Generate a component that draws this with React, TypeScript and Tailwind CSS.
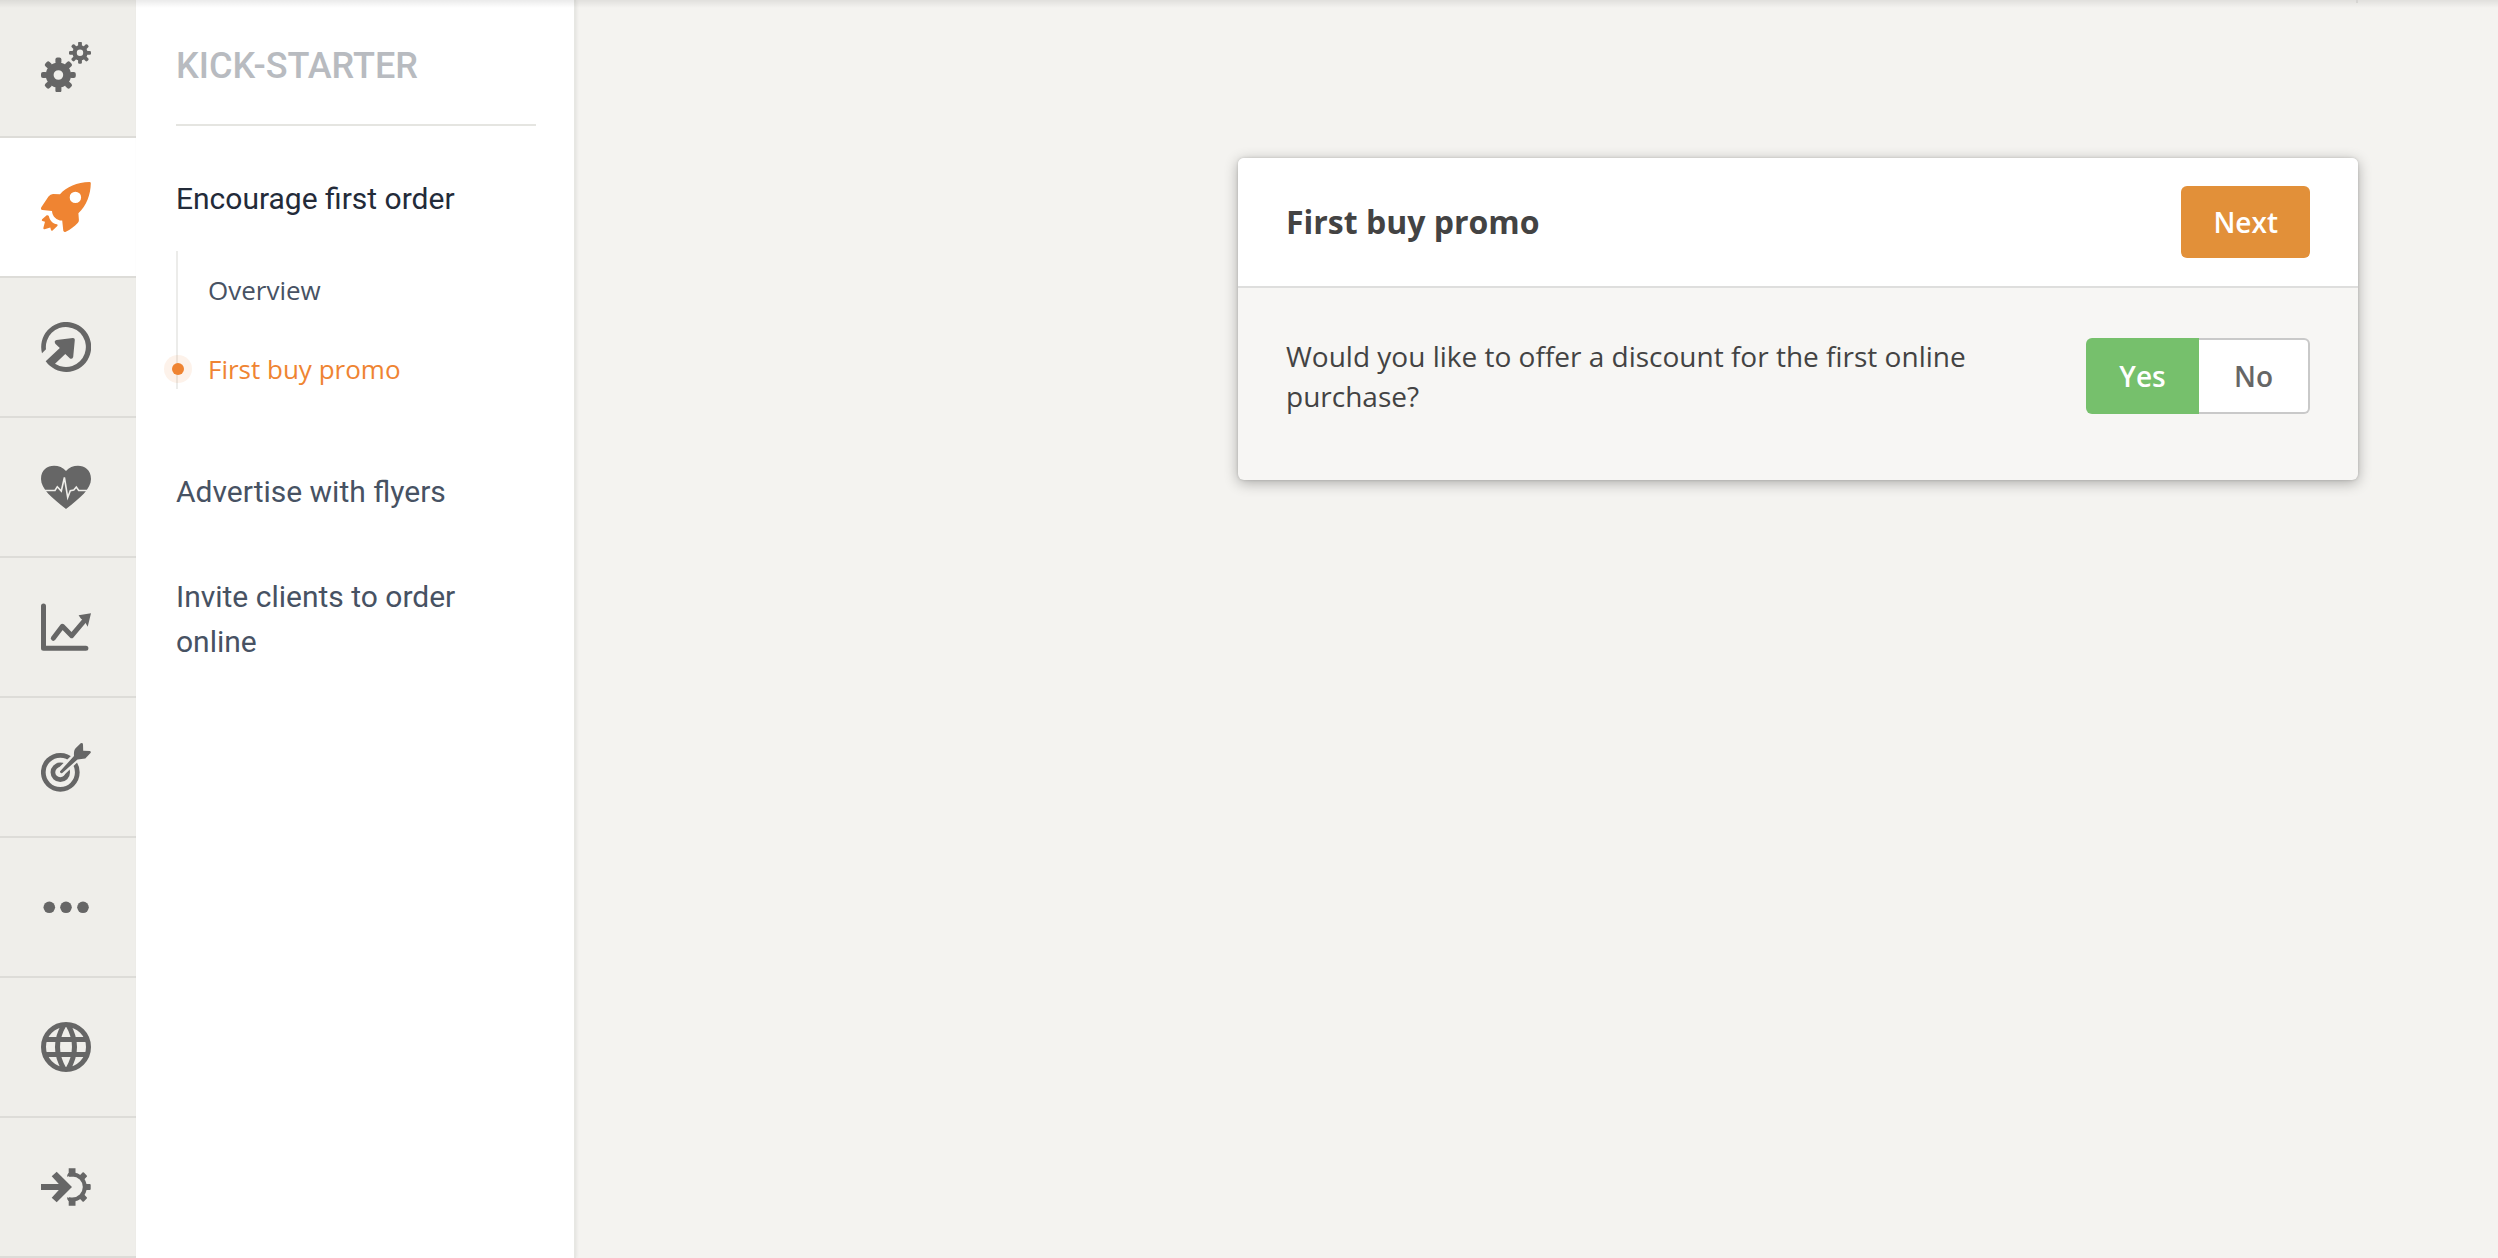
import { useState } from "react";
import type { ReactNode } from "react";

interface RailItem {
  label: string;
  icon: ReactNode;
}

const TEETH = [0, 45, 90, 135, 180, 225, 270, 315];

function Icon({ children }: { children: ReactNode }) {
  return (
    <svg viewBox="0 0 50 50" className="h-[50px] w-[50px]" fill="currentColor" aria-hidden="true">
      {children}
    </svg>
  );
}

interface GearProps {
  cx: number;
  cy: number;
  body: number;
  hole: number;
  reach: number;
  tooth: number;
}

function Gear({ cx, cy, body, hole, reach, tooth }: GearProps) {
  return (
    <g fill="none" stroke="currentColor">
      <circle cx={cx} cy={cy} r={(body + hole) / 2} strokeWidth={body - hole} />
      {TEETH.map((a) => (
        <rect
          key={a}
          x={cx - tooth / 2}
          y={cy - reach}
          width={tooth}
          height={reach - body + 1.5}
          rx={tooth / 3}
          fill="currentColor"
          stroke="none"
          transform={`rotate(${a} ${cx} ${cy})`}
        />
      ))}
    </g>
  );
}

const RAIL: RailItem[] = [
  {
    label: "Setup",
    icon: (
      <Icon>
        <Gear cx={17.4} cy={33} body={12.6} hole={4.8} reach={17.4} tooth={6} />
        <Gear cx={39} cy={10.8} body={7.6} hole={3.2} reach={11} tooth={3.8} />
      </Icon>
    ),
  },
  {
    label: "Kick-starter",
    icon: (
      <Icon>
        <path
          fillRule="evenodd"
          d="M19 12.2C25.5 5 36 .3 48.5 0Q49.8 0 49.8 1.3C49.6 13 45.5 23.5 37.4 31.3L37.9 38Q38 39.8 36.7 41C33.5 44.5 29.5 47.5 24.8 49.8Q22.8 50.5 22.3 48.8L21.2 38.5C16 38.7 11.2 34.5 11 28.9L1.5 28.1Q-.8 27.5 .3 25.3L7.5 14.5Q9.3 12 12 12ZM34.4 9.7a5.7 5.7 0 1 0 0 11.4a5.7 5.7 0 0 0 0-11.4Z"
        />
        <path d="M5.7 33.3Q7.2 32.7 7.9 34.2C8.7 38.5 12 41.8 16 42.2Q17.3 42.8 16.3 44L11.6 48.4Q10.3 49.2 9.9 47.7L9.3 45.4L3.6 47.2Q2 47.3 2.4 45.7L4 39.8L1.4 39Q.2 38.4 1.1 37.3Z" />
      </Icon>
    ),
  },
  {
    label: "Conversion",
    icon: (
      <Icon>
        <path d="M4.7 39.3L18.8 26L14.3 21.7Q12.6 18.8 15.5 18.1L31.8 16.1Q34 16 33.8 18L32.2 35Q31.2 37.5 29 36.6L24.3 32L14 41.8A20 20 0 1 0 5 27.3L1 31.3A25 25 0 1 1 4.7 39.3Z" />
      </Icon>
    ),
  },
  {
    label: "Loyalty",
    icon: (
      <Icon>
        <path d="M25 9C18 .5 0 1.5 0 17C0 27 11 36 25 47C39 36 50 27 50 17C50 1.5 32 .5 25 9Z" />
        <path
          d="M2.5 28.5H14L16.3 24.7L20.3 29L23.4 15.5L26.7 35.5L29.3 28.7L32.8 28L35.3 25L37.7 28.5H48"
          fill="none"
          stroke="#efeeea"
          strokeWidth="1.6"
        />
      </Icon>
    ),
  },
  {
    label: "Reports",
    icon: (
      <Icon>
        <g fill="none" stroke="currentColor" strokeWidth="5" strokeLinecap="round" strokeLinejoin="round">
          <path d="M2.5 4V46.2H44.9" />
          <path d="M12.3 36.3L21.4 24.3L30.7 33.7L43.5 18.5" />
        </g>
        <path d="M50 11.3L37.6 13.2L39.8 16.5L44 20L46.7 24.7Z" />
      </Icon>
    ),
  },
  {
    label: "Targeting",
    icon: (
      <Icon>
        <g fill="none" stroke="currentColor" strokeWidth="4.7">
          <circle cx="19.3" cy="30.3" r="17" />
          <circle cx="19.3" cy="30.3" r="7.4" />
        </g>
        <path d="M20.5 29.3L38 12.5" stroke="#efeeea" strokeWidth="9" />
        <path d="M33 14Q32.6 8 34.6 6.3L39.7 1.3Q41.8 .5 42 2.5L42.2 8.8L48.8 9Q50.500 9.5 49.5 11L44.3 16.5L36.5 17.5L21 31.2Q19 31.5 18.9 29.5Z" />
      </Icon>
    ),
  },
  {
    label: "More",
    icon: (
      <Icon>
        <circle cx="8.3" cy="25.3" r="5.8" />
        <circle cx="25" cy="25.3" r="5.8" />
        <circle cx="42" cy="25.3" r="5.8" />
      </Icon>
    ),
  },
  {
    label: "Website",
    icon: (
      <Icon>
        <g fill="none" stroke="currentColor" strokeWidth="5">
          <circle cx="25" cy="25" r="22.5" />
          <path d="M3 17.5H47M3 32.5H47M23.5 2Q9.5 25 23.5 48M26.5 2Q40.5 25 26.5 48" />
        </g>
      </Icon>
    ),
  },
  {
    label: "Integrations",
    icon: (
      <Icon>
        <path d="M0 22H17.8L10.7 14.3L15.7 9.7L31 25L15.7 40.3L10.7 35.7L17.8 28H0Z" />
        <path
          d="M27.7 13.2A12.5 12.5 0 0 1 31.3 12.5A12.5 12.5 0 0 1 31.3 37.5A12.5 12.5 0 0 1 27.7 36.8"
          fill="none"
          stroke="currentColor"
          strokeWidth="4"
        />
        <path d="M27.7 6.2H34.5V13H29.5L26.5 15Q25.5 12.5 27.7 11.5ZM27.7 43.8H34.5V37H29.5L26.5 35Q25.5 37.5 27.7 38.5Z" />
        {[45, 90, 135].map((a) => (
          <rect key={a} x="28.3" y="6.6" width="6" height="6" rx="1" transform={`rotate(${a} 31.3 25)`} />
        ))}
      </Icon>
    ),
  },
];

function Rail() {
  return (
    <nav aria-label="Main" className="flex w-[136px] shrink-0 flex-col bg-[#efeeea]">
      {RAIL.map((item, i) => (
        <a
          key={item.label}
          href="#"
          aria-label={item.label}
          className={`flex items-end justify-center border-b-2 border-[#dddcd8] pr-1 pb-11 ${
            i === 0 ? "h-[138px]" : "h-[140px]"
          } ${item.label === "Kick-starter" ? "bg-white text-[#ef8432]" : "text-[#666666]"}`}
        >
          {item.icon}
        </a>
      ))}
    </nav>
  );
}

function SubMenu() {
  return (
    <aside className="w-[440px] shrink-0 border-r-2 border-[#e7e7e3] bg-white pr-[38px] pl-10 font-[Roboto,sans-serif] text-[30px] leading-[45px] text-[#475263] shadow-[1px_0_3px_rgba(0,0,0,0.06)]">
      <h1 className="border-b-2 border-[#e5e5e1] pt-[46px] pb-[38px] text-[36px] leading-10 font-medium text-[#b8bbc0]">
        KICK-STARTER
      </h1>
      <a href="#" className="mt-[50px] block text-[#232b39]">
        Encourage first order
      </a>
      <ul className="mt-[30px] mb-[80px] h-[138px] border-l-2 border-[#ececea] pl-[30px] font-['Open_Sans',sans-serif] text-[26px] leading-[39px]">
        <li className="pt-5">
          <a href="#">Overview</a>
        </li>
        <li className="relative pt-10">
          <a href="#" aria-current="page" className="text-[#ef8432]">
            First buy promo
          </a>
          <span className="absolute bottom-[6px] -left-11 flex h-7 w-7 items-center justify-center rounded-full bg-[#ef8432]/10">
            <span className="h-3 w-3 rounded-full bg-[#ef8432]" />
          </span>
        </li>
      </ul>
      <a href="#" className="block">
        Advertise with flyers
      </a>
      <a href="#" className="mt-[60px] block">
        Invite clients to order online
      </a>
    </aside>
  );
}

function PromoCard() {
  const [offer, setOffer] = useState(true);

  return (
    <section className="w-full max-w-[1120px] self-start overflow-hidden rounded-md bg-[#f7f6f4] text-[#434343] shadow-[0_3px_14px_rgba(0,0,0,0.3),0_0_3px_rgba(0,0,0,0.15)]">
      <header className="flex items-center justify-between border-b-2 border-[#dededd] bg-white px-12 py-7">
        <h2 className="text-[32px] leading-10 font-bold">First buy promo</h2>
        <button type="button" className="h-[72px] rounded-md bg-[#e29039] px-8 text-[28px] font-semibold text-white">
          Next
        </button>
      </header>
      <div className="flex items-center gap-12 px-12 pt-12 pb-16">
        <p className="flex-1 text-[28px] leading-10">
          Would you like to offer a discount for the first online purchase?
        </p>
        <div role="group" aria-label="Offer a discount" className="flex h-[76px] text-[28px] font-semibold">
          <button
            type="button"
            aria-pressed={offer}
            onClick={() => setOffer(true)}
            className={`w-[113px] rounded-l-md ${
              offer ? "bg-[#76c06c] text-white" : "border-2 border-r-0 border-[#c9c9c9] bg-white text-[#666666]"
            }`}
          >
            Yes
          </button>
          <button
            type="button"
            aria-pressed={!offer}
            onClick={() => setOffer(false)}
            className={`w-[111px] rounded-r-md ${
              offer ? "border-2 border-l-0 border-[#c9c9c9] bg-white text-[#666666]" : "bg-[#76c06c] text-white"
            }`}
          >
            No
          </button>
        </div>
      </div>
    </section>
  );
}

export default function App() {
  return (
    <div className="relative flex min-h-screen bg-[#f4f3f0] font-['Open_Sans',sans-serif]">
      <Rail />
      <SubMenu />
      <main className="flex flex-1 justify-end pt-[158px] pr-[140px] pl-12">
        <PromoCard />
      </main>
      {/* shadow cast by the bar above */}
      <div className="pointer-events-none absolute inset-x-0 top-0 flex h-2 justify-end bg-linear-to-b from-black/8 to-transparent pr-[140px]">
        <span className="h-[3px] w-[2px] bg-[#d6d5d2]" />
      </div>
    </div>
  );
}
